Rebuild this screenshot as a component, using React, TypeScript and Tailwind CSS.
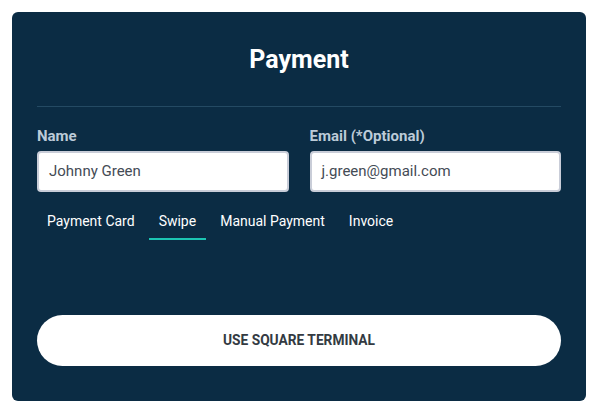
export default function App() {
    const tabs = ["Payment Card", "Swipe", "Manual Payment", "Invoice"];
    return (
        <div className="w-[600px] h-[414px] bg-white p-3 font-['Roboto',sans-serif]">
            <div className="h-[389px] w-[574px] bg-[#0b2c44] rounded-md px-[25px] pt-[33px] flex flex-col">
                <h1 className="text-center text-white text-[25px] font-bold leading-[30px]">Payment</h1>

                <div className="h-px bg-[#244a63] mt-[31px]"></div>

                {/* Name + email */}
                <div className="grid grid-cols-2 gap-[21px] mt-[20px]">
                    <div>
                        <label className="block text-[15px] font-bold text-[#bccbd8] leading-[18px]">Name</label>
                        <div className="mt-[6px] h-[41px] bg-white rounded border-2 border-[#c9cdd8] flex items-center px-[10px] text-[15px] text-[#444b55]">
                            Johnny Green
                        </div>
                    </div>
                    <div>
                        <label className="block text-[15px] font-bold text-[#bccbd8] leading-[18px]">Email (*Optional)</label>
                        <div className="mt-[6px] h-[41px] bg-white rounded border-2 border-[#c9cdd8] flex items-center px-[10px] text-[15px] text-[#444b55]">
                            j.green@gmail.com
                        </div>
                    </div>
                </div>

                {/* Tabs */}
                <div className="flex gap-1 mt-[15px]">
                    {tabs.map((t) => (
                        <div
                            key={t}
                            className={
                                t === "Swipe"
                                    ? "px-[10px] pt-[6px] pb-[8px] text-[14px] leading-[17px] text-white border-b-2 border-[#1cc4b2]"
                                    : "px-[10px] pt-[6px] pb-[8px] text-[14px] leading-[17px] text-white border-b-2 border-transparent"
                            }
                        >
                            {t}
                        </div>
                    ))}
                </div>

                <button className="mt-[75px] h-[51px] w-full bg-white rounded-full text-[13.75px] font-bold text-[#333a42]">
                    USE SQUARE TERMINAL
                </button>
            </div>
        </div>
    );
}
